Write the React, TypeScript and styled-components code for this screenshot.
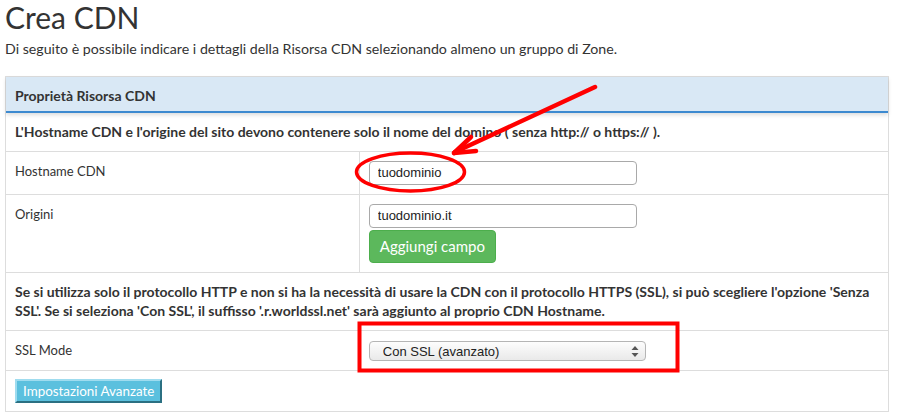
import React from 'react';
import styled, { createGlobalStyle } from 'styled-components';

const GlobalStyle = createGlobalStyle`
  html, body {
    margin: 0;
    padding: 0;
    background: #fff;
  }
  body {
    font-family: Lato, "Open Sans", sans-serif;
    font-size: 14px;
    line-height: 20px;
    color: #333;
  }
  * { box-sizing: border-box; }
`;

const Page = styled.div`
  position: relative;
  width: 899px;
  height: 420px;
  padding: 1px 10px 0 5px;
  overflow: hidden;
`;

const Title = styled.h1`
  margin: 0 0 6px;
  font-size: 30px;
  line-height: 32px;
  font-weight: 400;
  color: #333;
`;

const Intro = styled.p`
  margin: 0 0 17px;
  font-size: 14.2px;
  line-height: 20px;
`;

const Panel = styled.section`
  border: 1px solid #ddd;
`;

const PanelHeading = styled.div`
  padding: 9px 9px 5px;
  line-height: 20px;
  font-size: 14px;
  font-weight: 700;
  color: #333;
  background: #d9e8f5;
  border-bottom: 2px solid #3d8ad0;
  box-shadow: 0 2px 4px rgba(0, 0, 0, 0.14);
  position: relative;
`;

const Row = styled.div`
  display: grid;
  grid-template-columns: 40% 60%;
  border-top: 1px solid #ddd;
  font-size: 13px;
`;

const Cell = styled.div<{ $divider?: boolean; $pad?: number }>`
  padding: ${(p) => p.$pad ?? 9}px 9px;
  border-left: ${(p) => (p.$divider ? '1px solid #ddd' : 'none')};
  display: flex;
  flex-direction: column;
  align-items: flex-start;
`;

const Notice = styled.div<{ $first?: boolean }>`
  padding: 9px 9px;
  font-weight: 700;
  font-size: 14px;
  line-height: 19.5px;
  border-top: ${(p) => (p.$first ? 'none' : '1px solid #ddd')};
`;

const TextInput = styled.input`
  width: 268px;
  height: 24px;
  padding: 0 8px;
  border: 1px solid #a9a9a9;
  border-radius: 4px;
  font-family: "Liberation Sans", Arial, sans-serif;
  font-size: 13px;
  color: #222;
  background: #fff;
  outline: none;
`;

const SuccessButton = styled.button`
  margin-top: 2px;
  height: 33px;
  padding: 0 10px;
  border: 1px solid #4cae4c;
  border-radius: 4px;
  background: #5cb85c;
  color: #fff;
  font-family: Lato, sans-serif;
  font-size: 15px;
  line-height: 20px;
`;

const SelectBox = styled.div`
  position: relative;
  margin-top: 1px;
  width: 277px;
  height: 20px;
`;

const Select = styled.select`
  appearance: none;
  -webkit-appearance: none;
  width: 100%;
  height: 100%;
  padding: 0 20px 0 13px;
  border: 1px solid #b5b5b5;
  border-radius: 4px;
  background: linear-gradient(#fdfdfd, #e9e9e9);
  font-family: "Liberation Sans", Arial, sans-serif;
  font-size: 13px;
  color: #222;
  outline: none;
`;

const SelectArrows = styled.svg`
  position: absolute;
  right: 7px;
  top: 5px;
  pointer-events: none;
`;

const InfoButton = styled.button`
  height: 24px;
  padding: 0 6px;
  border: 2px solid;
  border-color: #9fdcef #2b7082 #2b7082 #9fdcef;
  background: #5bc0de;
  color: #fff;
  font-family: Lato, sans-serif;
  font-size: 13.4px;
  line-height: 18px;
`;

const Annotations = styled.svg`
  position: absolute;
  left: 0;
  top: 0;
  pointer-events: none;
`;

export default function App() {
  return (
    <>
      <GlobalStyle />
      <Page>
        <Title>Crea CDN</Title>
        <Intro>
          Di seguito è possibile indicare i dettagli della Risorsa CDN selezionando almeno un gruppo di Zone.
        </Intro>
        <Panel>
          <PanelHeading>Proprietà Risorsa CDN</PanelHeading>
          <Notice $first>
            L'Hostname CDN e l'origine del sito devono contenere solo il nome del domino ( senza http:// o https:// ).
          </Notice>
          <Row>
            <Cell>Hostname CDN</Cell>
            <Cell $divider>
              <TextInput defaultValue="tuodominio" />
            </Cell>
          </Row>
          <Row>
            <Cell>Origini</Cell>
            <Cell $divider>
              <TextInput defaultValue="tuodominio.it" />
              <SuccessButton>Aggiungi campo</SuccessButton>
            </Cell>
          </Row>
          <Notice>
            Se si utilizza solo il protocollo HTTP e non si ha la necessità di usare la CDN con il protocollo HTTPS (SSL), si
            può scegliere l'opzione 'Senza SSL'. Se si seleziona 'Con SSL', il suffisso '.r.worldssl.net' sarà aggiunto al
            proprio CDN Hostname.
          </Notice>
          <Row>
            <Cell>SSL Mode</Cell>
            <Cell $divider>
              <SelectBox>
                <Select defaultValue="ssl">
                  <option value="nossl">Senza SSL</option>
                  <option value="ssl">Con SSL (avanzato)</option>
                </Select>
                <SelectArrows width="8" height="11" viewBox="0 0 8 11">
                  <path d="M4 0 L7.5 4 H0.5 Z" fill="#555" />
                  <path d="M4 11 L7.5 7 H0.5 Z" fill="#555" />
                </SelectArrows>
              </SelectBox>
            </Cell>
          </Row>
          <Row>
            <Cell $pad={8}>
              <InfoButton>Impostazioni Avanzate</InfoButton>
            </Cell>
          </Row>
        </Panel>
        <Annotations width="899" height="420" viewBox="0 0 899 420">
          <ellipse cx="410.5" cy="172" rx="54" ry="19" fill="none" stroke="#f00" strokeWidth="3.5" />
          <g stroke="#f00" strokeWidth="4.5" strokeLinecap="round" fill="none">
            <line x1="595" y1="87" x2="455" y2="152" />
            <line x1="454" y1="153" x2="471" y2="137" />
            <line x1="454" y1="153" x2="476" y2="151" />
          </g>
          <rect x="359.5" y="323.5" width="318" height="47" fill="none" stroke="#f00" strokeWidth="4" />
        </Annotations>
      </Page>
    </>
  );
}
